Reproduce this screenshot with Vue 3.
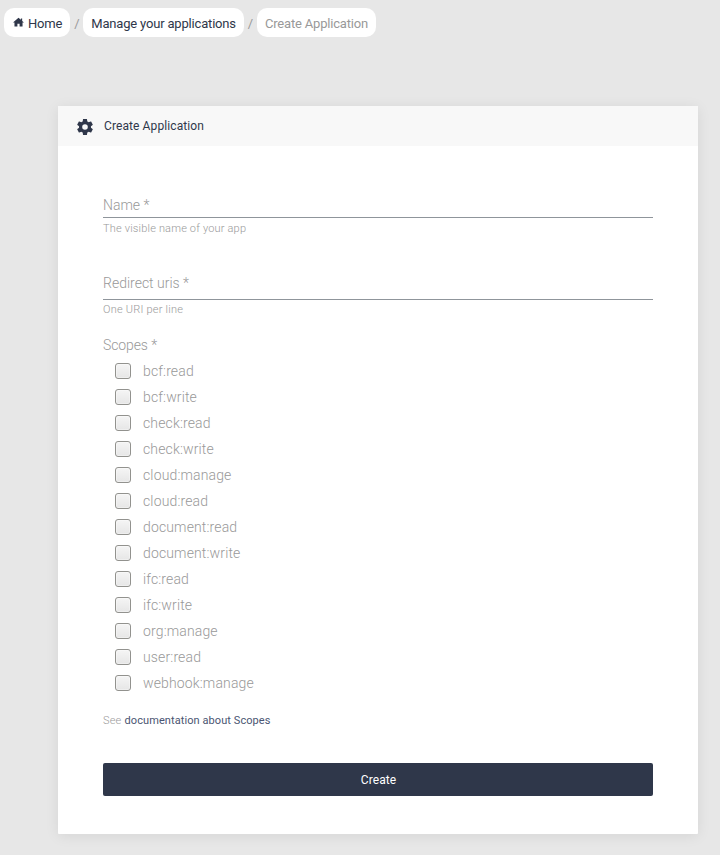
<script setup>
import { ref } from 'vue'

const scopes = [
  'bcf:read', 'bcf:write', 'check:read', 'check:write', 'cloud:manage',
  'cloud:read', 'document:read', 'document:write', 'ifc:read', 'ifc:write',
  'org:manage', 'user:read', 'webhook:manage'
]
const selected = ref([])
</script>

<template>
  <div class="page">
    <nav class="breadcrumb">
      <a class="crumb home">
        <svg class="home-icon" viewBox="0 0 12 10" width="11" height="10">
          <path d="M6 .4 0 5.6h1.6V10h3.2V6.8h2.4V10h3.2V5.6H12L10 3.8V1.3H8.6v1.3z" fill="#2f374a" />
        </svg>
        <span>Home</span>
      </a>
      <span class="sep">/</span>
      <a class="crumb">Manage your applications</a>
      <span class="sep">/</span>
      <span class="crumb current">Create Application</span>
    </nav>

    <main class="card">
      <header class="card-header">
        <svg viewBox="2 2 20 20" width="16" height="16">
          <path fill="#2f374a" d="M19.43 12.98c.04-.32.07-.64.07-.98s-.03-.66-.07-.98l2.11-1.65c.19-.15.24-.42.12-.64l-2-3.46c-.12-.22-.39-.3-.61-.22l-2.49 1c-.52-.4-1.08-.73-1.69-.98l-.38-2.65C14.46 2.18 14.25 2 14 2h-4c-.25 0-.46.18-.49.42l-.38 2.65c-.61.25-1.17.59-1.69.98l-2.49-1c-.23-.09-.49 0-.61.22l-2 3.46c-.13.22-.07.49.12.64l2.11 1.65c-.04.32-.07.65-.07.98s.03.66.07.98l-2.11 1.65c-.19.15-.24.42-.12.64l2 3.46c.12.22.39.3.61.22l2.49-1c.52.4 1.08.73 1.69.98l.38 2.65c.03.24.24.42.49.42h4c.25 0 .46-.18.49-.42l.38-2.65c.61-.25 1.17-.59 1.69-.98l2.49 1c.23.09.49 0 .61-.22l2-3.46c.12-.22.07-.49-.12-.64zM12 15.5a3.5 3.5 0 1 1 0-7 3.5 3.5 0 0 1 0 7z" />
        </svg>
        <h1>Create Application</h1>
      </header>

      <form class="form" @submit.prevent>
        <input class="field" type="text" placeholder="Name *">
        <p class="hint">The visible name of your app</p>
        <textarea class="field area" rows="1" placeholder="Redirect uris *"></textarea>
        <p class="hint area-hint">One URI per line</p>
        <div class="scopes-title">Scopes *</div>
        <ul class="scopes">
          <li v-for="scope in scopes" :key="scope">
            <label>
              <input v-model="selected" class="check" type="checkbox" :value="scope">
              <span>{{ scope }}</span>
            </label>
          </li>
        </ul>
        <p class="docs">See <a>documentation about Scopes</a></p>
        <button class="submit" type="submit">Create</button>
      </form>
    </main>
  </div>
</template>

<style>
body {
  background: #e7e7e7;
}
</style>

<style scoped>
.page {
  box-sizing: border-box;
  height: 855px;
  padding-top: 8px;
  background: #e7e7e7;
  font-family: Roboto, "Liberation Sans", sans-serif;
  color: #2f374a;
}
.breadcrumb {
  display: flex;
  align-items: center;
  height: 29px;
  padding-left: 4px;
  font-size: 13px;
  letter-spacing: -0.18px;
}
.crumb {
  box-sizing: border-box;
  height: 29px;
  padding: 0 8px;
  border-radius: 10px;
  background: #fff;
  line-height: 31px;
  white-space: nowrap;
}
.home {
  display: flex;
}
.home-icon {
  margin: 9px 4px 0 1px;
}
.current {
  color: #999;
}
.sep {
  width: 13px;
  text-align: center;
  line-height: 31px;
  padding-top: 2px;
  color: #999;
}
.card {
  width: 640px;
  height: 728px;
  margin: 69px 0 0 58px;
  background: #fff;
  border-radius: 1px;
  box-shadow: 0 2px 14px rgba(0, 0, 0, 0.08);
}
.card-header {
  box-sizing: border-box;
  display: flex;
  align-items: center;
  gap: 11px;
  height: 40px;
  padding: 2px 19px 0;
  background: #f8f8f8;
}
h1 {
  margin: 0 0 2px;
  font-size: 12px;
  font-weight: 400;
  line-height: 16px;
  letter-spacing: 0.1px;
}
.form {
  padding: 46px 45px 0;
}
.field {
  display: block;
  box-sizing: border-box;
  width: 100%;
  height: 26px;
  padding: 1px 0 0;
  border: 0;
  border-bottom: 1px solid #8f959b;
  border-radius: 0;
  outline: 0;
  background: transparent;
  font: 300 14px/24px Roboto, sans-serif;
}
.field::placeholder {
  color: #999;
  opacity: 1;
}
.area {
  height: 29px;
  margin-top: 33px;
  padding-top: 0;
  resize: none;
  overflow: hidden;
}
.hint {
  height: 18px;
  margin: 0;
  padding-top: 2px;
  font-size: 11px;
  font-weight: 300;
  line-height: 18px;
  letter-spacing: 0.18px;
  color: #999;
}
.area-hint {
  height: 19px;
  padding-top: 1px;
  letter-spacing: 0.22px;
}
.scopes-title {
  margin-top: 15px;
  font-size: 14px;
  font-weight: 300;
  line-height: 20px;
  letter-spacing: -0.1px;
  color: #999;
}
.scopes {
  margin: 3px 0 0;
  padding: 0 0 0 12px;
  list-style: none;
}
.scopes label {
  display: flex;
  align-items: center;
  gap: 12px;
  height: 26px;
  font-size: 14px;
  font-weight: 300;
  letter-spacing: 0.14px;
  color: #999;
}
.check {
  appearance: none;
  box-sizing: border-box;
  width: 16px;
  height: 16px;
  margin: 0;
  border: 1px solid #92928e;
  border-radius: 3px;
  background: linear-gradient(#f5f5f5, #e6e6e6);
  box-shadow: inset 0 0 0 1px rgba(255, 255, 255, 0.35);
}
.docs {
  margin: 17px 0 0;
  font-size: 11px;
  font-weight: 300;
  line-height: 16px;
  letter-spacing: 0.12px;
  color: #999;
}
.docs a {
  margin-left: 0.5px;
  font-weight: 400;
  letter-spacing: 0.08px;
  color: #4a5572;
}
.submit {
  display: block;
  width: 100%;
  height: 33px;
  margin-top: 34px;
  padding: 1px 0 0 1px;
  border: 0;
  border-radius: 2px;
  background: #2f374a;
  color: #fff;
  font: 400 12px/32px Roboto, sans-serif;
  letter-spacing: 0.1px;
}
</style>
